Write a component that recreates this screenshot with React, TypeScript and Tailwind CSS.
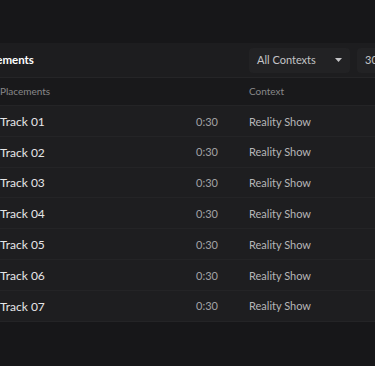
const rows = ['01', '02', '03', '04', '05', '06', '07'];

export default function App() {
  return (
    <div
      className="w-[375px] h-[366px] overflow-hidden bg-[#171719] pt-[43px]"
      style={{ fontFamily: 'Lato, "Noto Sans", sans-serif' }}
    >
      <div className="bg-[#1b1b1d]">
        {/* Header */}
        <div className="h-[35px] flex items-center border-b border-[#252527] bg-[#1d1d1f]">
          <h2 className="w-[249px] shrink-0 -ml-[25px] text-[11.5px] font-bold text-white whitespace-nowrap">
            Placements
          </h2>
          <div className="flex items-center gap-[7px] shrink-0 ml-[25px]">
            <div className="w-[101px] h-[25px] shrink-0 bg-[#222224] rounded flex items-center px-[8px] text-[11px] text-[#c4c4c6] whitespace-nowrap">
              <span>All Contexts</span>
              <svg className="ml-auto" width="7" height="4" viewBox="0 0 7 4">
                <path d="M0 0h7L3.5 4z" fill="#c4c4c6" />
              </svg>
            </div>
            <div className="w-[60px] h-[25px] shrink-0 bg-[#222224] rounded flex items-center pl-[8px] text-[11px] text-[#c4c4c6] whitespace-nowrap">
              30 Days
            </div>
          </div>
        </div>

        {/* Column headers */}
        <div className="h-[27px] flex items-center bg-[#19191b] text-[10px] text-[#88888a]">
          <span className="w-[249px]">Placements</span>
          <span>Context</span>
        </div>

        {/* Rows */}
        {rows.map((n) => (
          <div
            key={n}
            className="h-[30.8px] flex items-center border-t border-[#242426] bg-[#1e1e20] text-[11px] pt-[2px]"
          >
            <span className="w-[196px] text-[#e6e6e8] text-[12px]">Track {n}</span>
            <span className="w-[53px] text-[#a2a2a4]">0:30</span>
            <span className="text-[#b6b6b8]">Reality Show</span>
          </div>
        ))}
        <div className="h-[1px] bg-[#242426]" />
      </div>
    </div>
  );
}
